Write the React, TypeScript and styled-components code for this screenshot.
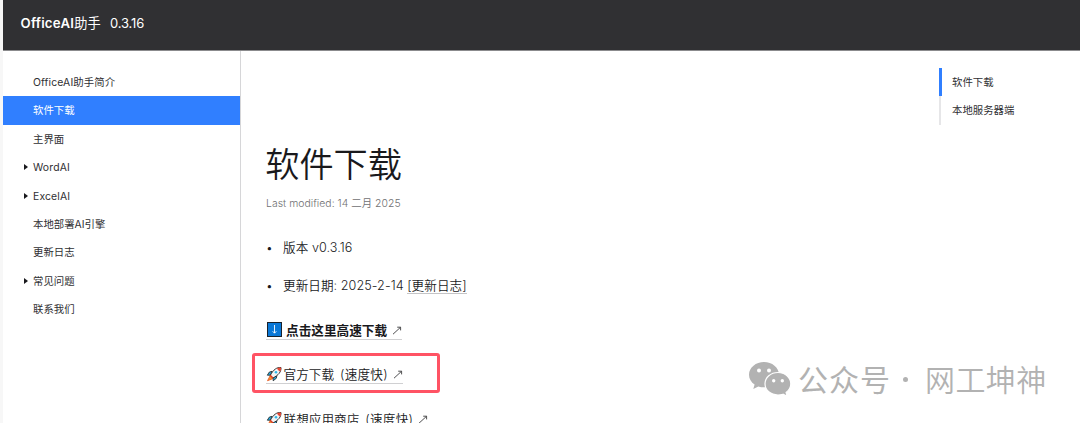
import React from 'react'
import styled, { createGlobalStyle } from 'styled-components'

const GlobalStyle = createGlobalStyle`

    * {
        box-sizing: border-box;
    }

    body {
        margin: 0;
        overflow: hidden;
        background: #fff;
        color: #19191c;
        font-family: Inter, "Noto Sans CJK SC", sans-serif;
    }

`

const Page = styled.div`

    position: relative;
    display: flex;
    flex-direction: column;
    height: 423px;
    overflow: hidden;
    border-left: 3px solid #f7f7f7;
    white-space: nowrap;

`

const Header = styled.header`

    display: flex;
    align-items: center;
    gap: 9px;
    flex: none;
    height: 51px;
    padding: 0 17.5px 5px;
    background: #303033;
    border-bottom: 1px solid #8b8b8d;
    color: #fff;
    font-size: 13px;

`

const Brand = styled.span`

    font-weight: 600;
    font-size: 13.2px;
    letter-spacing: 0.25px;

    span {
        font-weight: 400;
    }

`

const Version = styled.span`

    letter-spacing: -0.15px;

`

const Body = styled.div`

    display: flex;
    flex: 1;
    min-height: 0;

`

const Sidebar = styled.nav`

    flex: none;
    width: 238px;
    padding-top: 16.8px;
    border-right: 1px solid #d6d6d8;

`

const NavItem = styled.div<{ $active?: boolean }>`

    display: flex;
    align-items: center;
    height: 28.4px;
    padding-left: 20px;
    background: ${p => p.$active ? '#307fff' : 'transparent'};
    color: ${p => p.$active ? '#fff' : '#303033'};
    font-size: 10.4px;
    line-height: 14px;

`

const Caret = styled.i<{ $visible?: boolean }>`

    width: 10px;

    &::before {
        content: '';
        display: block;
        width: 0;
        border: 3px solid transparent;
        border-left: 4px solid ${p => p.$visible ? '#19191c' : 'transparent'};
        border-right: 0;
        margin-left: 1px;
    }

`

const Label = styled.span<{ $spacing?: number }>`

    padding-top: 2px;
    letter-spacing: ${p => p.$spacing || 0}px;

`

const Article = styled.main`

    flex: 1;
    padding: 90px 0 0 25px;

`

const Title = styled.h1`

    margin: 0 0 0 -0.8px;
    height: 48px;
    line-height: 48px;
    font-size: 34.2px;
    font-weight: 350;

`

const Modified = styled.p`

    margin: 6px 0 0;
    height: 18px;
    line-height: 18px;
    color: #707072;
    font-size: 10.4px;
    font-weight: 350;
    letter-spacing: 0.04px;

`

const List = styled.ul`

    display: flex;
    flex-direction: column;
    gap: 18px;
    margin: 25px 0 0;
    padding: 0;
    list-style: none;
    font-weight: 350;

    li {
        display: flex;
        height: 20px;
        line-height: 20px;
        font-size: 12.6px;
        letter-spacing: 0.06px;
    }

    li::before {
        content: '•';
        width: 17px;
        font-size: 12px;
    }

`

const Underlined = styled.span`

    height: 18px;
    margin-left: 3.5px;
    border-bottom: 1px solid #c4c4c6;

`

const Links = styled.div`

    display: flex;
    flex-direction: column;
    align-items: flex-start;
    gap: 25.5px;
    margin-top: 24.5px;

`

const DownloadLink = styled.a<{ $bold?: boolean }>`

    display: flex;
    align-items: center;
    height: 19px;
    border-bottom: 1px solid #d0d0d2;
    font-size: 12.65px;
    line-height: 19px;
    font-weight: ${p => p.$bold ? 700 : 350};

    > svg {
        flex: none;
    }

`

const LinkText = styled.span<{ $gap?: number }>`

    margin-left: ${p => p.$gap || 0.5}px;
    margin-right: 5px;
    padding-top: 1px;

`

const Speed = styled.span`

    margin-left: 6px;
    letter-spacing: 0.2px;

`

const Toc = styled.aside`

    width: 141.5px;
    padding-top: 16.8px;

`

const TocItem = styled.div<{ $active?: boolean }>`

    display: flex;
    align-items: center;
    height: 28.4px;
    padding: 2px 0 0 ${p => p.$active ? 10.5 : 11.5}px;
    border-left: ${p => p.$active ? '3px solid #307fff' : '2px solid #e6e6e8'};
    color: #303033;
    font-size: 10.4px;
    line-height: 14px;

`

const Highlight = styled.div`

    position: absolute;
    left: 249px;
    top: 353px;
    width: 188px;
    height: 40px;
    border: 3px solid #ff5364;
    border-radius: 3px;

`

const Watermark = styled.div`

    position: absolute;
    left: 746px;
    top: 357px;
    display: flex;
    align-items: center;
    height: 42px;
    color: #b2b2b2;
    font-size: 30px;
    font-family: "Noto Sans CJK SC", sans-serif;

    svg {
        margin-top: 1px;
    }

`

const Account = styled.span`

    margin-left: 7px;
    letter-spacing: 1px;

`

const Dot = styled.i`

    width: 5px;
    height: 5px;
    margin: 3px 17px 0 12px;
    border-radius: 50%;
    background: #b2b2b2;

`

const AccountName = styled.span`

    font-weight: 350;
    letter-spacing: 0.4px;

`

const Arrow = () => (
    <svg width="10" height="10" viewBox="0 0 10 10" fill="none" stroke="#303033" strokeWidth="0.85">
        <path d="M1 9.2L8.4 2.4M5.2 2.2H8.6V5.4" />
    </svg>
)

const DownIcon = () => (
    <svg width="16" height="15" viewBox="0 0 16 15">
        <rect x="1.5" y="0.5" width="14" height="14" fill="#0a78d7" stroke="#19222c" />
        <path d="M8.5 3V11M6.7 9.3L8.5 11.2L10.3 9.3" fill="none" stroke="#fff" strokeWidth="0.9" />
    </svg>
)

const Rocket = () => (
    <svg width="17" height="16" viewBox="0 0 17 16">
        <path d="M4 10L1.5 14.7L6.5 12.8Z" fill="#f7942a" stroke="#e6531d" strokeWidth="0.8" />
        <path d="M6.2 5.3L3.4 6L1.3 9.2L4.6 9.2ZM10.8 9.7L10.4 12.2L7.2 14.8L7 11.6Z" fill="#26a9df" stroke="#222" strokeWidth="0.8" />
        <path d="M15 1.5C10.8 1.2 7.6 3.3 4.3 9.3L6.9 12C12.6 9.1 15.2 6 15 1.5Z" fill="#f1f3f5" stroke="#222" strokeWidth="0.9" />
        <path d="M15 1.5L11.1 1.9C11.3 3.8 12.8 5.2 14.5 5.3C15 4 15.1 2.7 15 1.5Z" fill="#e94632" />
        <circle cx="10" cy="6.3" r="1.3" fill="#31b7e9" />
        <path d="M4.2 9.1L7 12" stroke="#d83b22" strokeWidth="1.3" />
    </svg>
)

const WeChat = () => (
    <svg width="42" height="36" viewBox="0 0 42 36" fill="#b2b2b2">
        <path d="M15 1C7 1 0 6.5 0 13.7C0 17.8 2.2 21.2 5.6 23.5L4.3 28L9.3 25.4C11.2 26 13 26.3 15.3 26.3C23.5 26.3 30 20.7 30 13.7C30 6.5 23 1 15 1Z" />
        <path d="M29 11.5C21.7 11.5 16 16.5 16 22.8C16 29.2 21.7 34 29 34C30.7 34 32.4 33.7 34 33.2L38.2 35.3L37.1 31.6C40 29.5 41.8 26.4 41.8 22.8C41.8 16.5 36 11.5 29 11.5Z" stroke="#fff" strokeWidth="1.2" />
        <g fill="#fff">
            <circle cx="10" cy="9.5" r="2" />
            <circle cx="20" cy="9.5" r="2" />
            <circle cx="24.7" cy="19.7" r="1.7" />
            <circle cx="33.3" cy="19.7" r="1.7" />
        </g>
    </svg>
)

interface navEntry {
    title: string
    active?: boolean
    nested?: boolean
    spacing?: number
}

const entries: navEntry[] = [
    { title: 'OfficeAI助手简介', spacing: 0.12 },
    { title: '软件下载', active: true },
    { title: '主界面' },
    { title: 'WordAI', nested: true, spacing: 0.15 },
    { title: 'ExcelAI', nested: true, spacing: 0.15 },
    { title: '本地部署AI引擎' },
    { title: '更新日志' },
    { title: '常见问题', nested: true },
    { title: '联系我们' },
]

const App: React.FC = () => {

    return (
        <Page>
            <GlobalStyle />
            <Header>
                <Brand>OfficeAI<span>助手</span></Brand>
                <Version>0.3.16</Version>
            </Header>
            <Body>
                <Sidebar>
                    {
                        entries.map(entry => (
                            <NavItem key={entry.title} $active={entry.active}>
                                <Caret $visible={entry.nested} />
                                <Label $spacing={entry.spacing}>{entry.title}</Label>
                            </NavItem>
                        ))
                    }
                </Sidebar>
                <Article>
                    <Title>软件下载</Title>
                    <Modified>Last modified: 14 二月 2025</Modified>
                    <List>
                        <li>版本 v0.3.16</li>
                        <li>更新日期: 2025-2-14 <Underlined>[更新日志]</Underlined></li>
                    </List>
                    <Links>
                        <DownloadLink $bold>
                            <DownIcon />
                            <LinkText $gap={4}>点击这里高速下载</LinkText>
                            <Arrow />
                        </DownloadLink>
                        <DownloadLink>
                            <Rocket />
                            <LinkText>官方下载<Speed>(速度快)</Speed></LinkText>
                            <Arrow />
                        </DownloadLink>
                        <DownloadLink>
                            <Rocket />
                            <LinkText>联想应用商店<Speed>(速度快)</Speed></LinkText>
                            <Arrow />
                        </DownloadLink>
                    </Links>
                </Article>
                <Toc>
                    <TocItem $active>软件下载</TocItem>
                    <TocItem>本地服务器端</TocItem>
                </Toc>
            </Body>
            <Highlight />
            <Watermark>
                <WeChat />
                <Account>公众号</Account>
                <Dot />
                <AccountName>网工坤神</AccountName>
            </Watermark>
        </Page>
    )
}

export default App
